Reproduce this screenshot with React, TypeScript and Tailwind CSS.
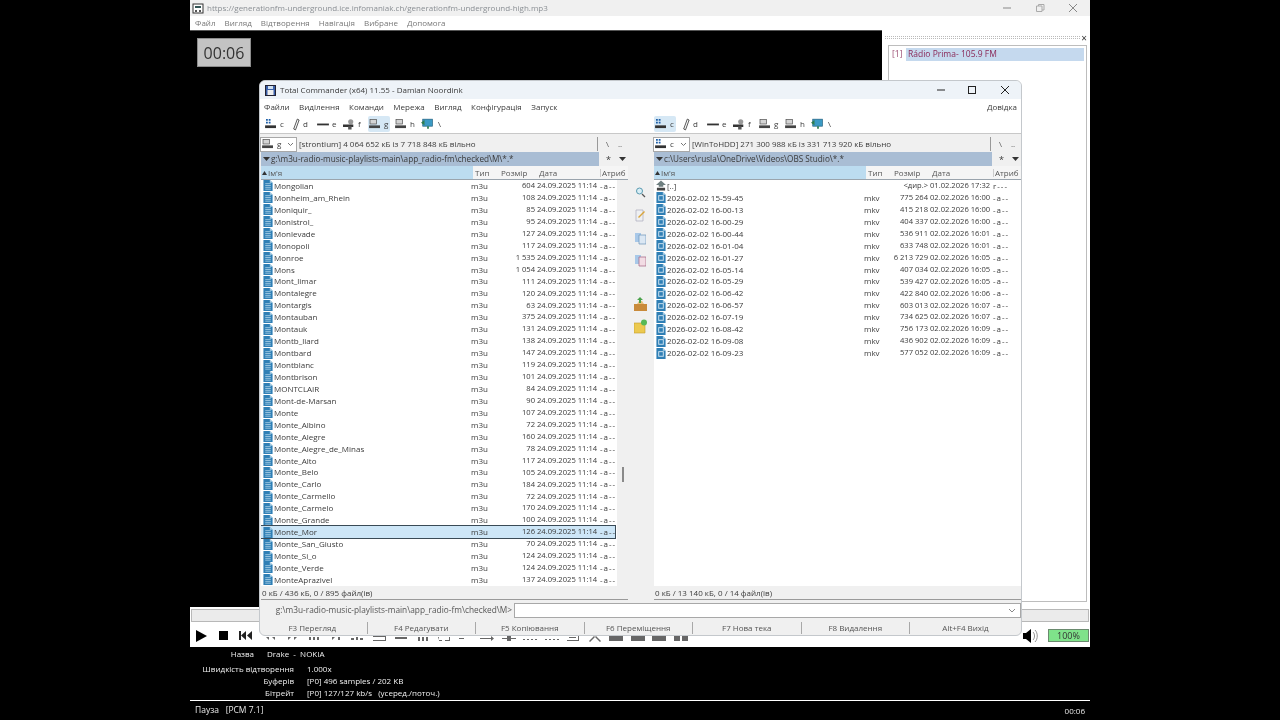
import React from 'react';

const leftRows: [string, string][] = [
  ['Mongolian', '604'], ['Monheim_am_Rhein', '108'], ['Moniquir_', '85'], ['Monistrol_', '95'],
  ['Monlevade', '127'], ['Monopoli', '117'], ['Monroe', '1 535'], ['Mons', '1 054'],
  ['Mont_limar', '111'], ['Montalegre', '120'], ['Montargis', '63'], ['Montauban', '375'],
  ['Montauk', '131'], ['Montb_liard', '138'], ['Montbard', '147'], ['Montblanc', '119'],
  ['Montbrison', '101'], ['MONTCLAIR', '84'], ['Mont-de-Marsan', '90'], ['Monte', '107'],
  ['Monte_Albino', '72'], ['Monte_Alegre', '160'], ['Monte_Alegre_de_Minas', '78'], ['Monte_Alto', '117'],
  ['Monte_Belo', '105'], ['Monte_Carlo', '184'], ['Monte_Carmello', '72'], ['Monte_Carmelo', '170'],
  ['Monte_Grande', '100'], ['Monte_Mor', '126'], ['Monte_San_Giusto', '70'], ['Monte_Si_o', '124'],
  ['Monte_Verde', '124'], ['MonteAprazivel', '137'],
];

const rightRows: [string, string, string][] = [
  ['2026-02-02 15-59-45', '775 264', '02.02.2026 16:00'],
  ['2026-02-02 16-00-13', '415 218', '02.02.2026 16:00'],
  ['2026-02-02 16-00-29', '404 337', '02.02.2026 16:00'],
  ['2026-02-02 16-00-44', '536 911', '02.02.2026 16:01'],
  ['2026-02-02 16-01-04', '633 748', '02.02.2026 16:01'],
  ['2026-02-02 16-01-27', '6 213 729', '02.02.2026 16:05'],
  ['2026-02-02 16-05-14', '407 034', '02.02.2026 16:05'],
  ['2026-02-02 16-05-29', '539 427', '02.02.2026 16:05'],
  ['2026-02-02 16-06-42', '422 840', '02.02.2026 16:06'],
  ['2026-02-02 16-06-57', '603 013', '02.02.2026 16:07'],
  ['2026-02-02 16-07-19', '734 625', '02.02.2026 16:07'],
  ['2026-02-02 16-08-42', '756 173', '02.02.2026 16:09'],
  ['2026-02-02 16-09-08', '436 902', '02.02.2026 16:09'],
  ['2026-02-02 16-09-23', '577 052', '02.02.2026 16:09'],
];

function DocIcon({ video }: { video?: boolean }) {
  return (
    <svg width="10" height="11" viewBox="0 0 10 12" className="shrink-0">
      <path d="M0 0h7l3 3v9H0z" fill="#2f7fb5" />
      <path d="M7 0l3 3H7z" fill="#a9cfe6" />
      {video ? (
        <rect x="2.500" y="4" width="5" height="5" fill="none" stroke="#d5e8f3" strokeWidth="1" />
      ) : (
        <path d="M2 4h6M2 6h6M2 8h6M2 10h6" stroke="#bcdcee" strokeWidth="0.8" />
      )}
    </svg>
  );
}

function UpIcon() {
  return (
    <svg width="10" height="11" viewBox="0 0 11 11" className="shrink-0">
      <path d="M5.500 0L11 5H8v2H3V5H0z" fill="#6f7f80" />
      <path d="M1 8h9v3H1z" fill="#444" />
    </svg>
  );
}

function DriveIcon({ kind }: { kind: string }) {
  if (kind === 'c') {
    return (
      <svg width="12" height="10" viewBox="0 0 13 11" className="shrink-0">
        <path d="M1 0h2v2H1zM4 0h2v2H4zM1 3h2v2H1zM4 3h2v2H4z" fill="#1d5fa8" />
        <rect x="0" y="7" width="12" height="3" fill="#333" />
      </svg>
    );
  }
  if (kind === 'd') {
    return (
      <svg width="9" height="13" viewBox="0 0 10 14" className="shrink-0">
        <path d="M7 1L3 12l2 1 4-11z" fill="#fff" stroke="#333" strokeWidth="0.9" />
      </svg>
    );
  }
  if (kind === 'e') {
    return (
      <svg width="12" height="10" viewBox="0 0 13 11" className="shrink-0">
        <rect x="0" y="5" width="13" height="2" fill="#333" />
      </svg>
    );
  }
  if (kind === 'f') {
    return (
      <svg width="12" height="12" viewBox="0 0 14 13" className="shrink-0">
        <circle cx="9" cy="4" r="3" fill="#999" />
        <path d="M0 7h12v3H0z" fill="#333" />
        <path d="M6 9h4v4H6z" fill="#555" />
      </svg>
    );
  }
  if (kind === 'net') {
    return (
      <svg width="14" height="12" viewBox="0 0 16 13" className="shrink-0">
        <rect x="2" y="1" width="11" height="8" fill="#3b9ac4" stroke="#20607f" strokeWidth="0.8" />
        <path d="M0 5l4-3v6zM7 9h2v3H7z" fill="#2f7d4f" />
      </svg>
    );
  }
  return (
    <svg width="12" height="10" viewBox="0 0 13 11" className="shrink-0">
      <rect x="1" y="0.500" width="7" height="5" fill="#d4d4d4" stroke="#555" strokeWidth="0.8" />
      <rect x="0" y="7" width="12" height="3" fill="#444" />
    </svg>
  );
}

function DriveBar({ active }: { active: string }) {
  const items: [string, string][] = [['c', 'c'], ['d', 'd'], ['e', 'e'], ['f', 'f'], ['g', 'g'], ['h', 'h'], ['net', '\\']];
  return (
    <div className="flex items-center gap-[4px]">
      {items.map(([k, label]) => (
        <div
          key={k}
          className={`h-[16px] w-[22px] pl-[1px] flex items-center gap-[3px] rounded-[2px] ${active === k ? 'bg-[#d6e8f5]' : ''}`}
        >
          <DriveIcon kind={k} />
          <span>{label}</span>
        </div>
      ))}
    </div>
  );
}

function Triangle({ up }: { up?: boolean }) {
  return (
    <svg width={up ? 5 : 7} height="4" viewBox="0 0 7 4" preserveAspectRatio="none" className="shrink-0">
      <path d={up ? 'M3.500 0L7 4H0z' : 'M0 0h7L3.500 4z'} fill="#333" />
    </svg>
  );
}

type PanelProps = {
  drive: string;
  info: string;
  path: string;
  status: string;
  children: React.ReactNode;
  scroll?: boolean;
};

function Panel({ drive, info, path, status, children, scroll }: PanelProps) {
  return (
    <div className="w-[368px] shrink-0 flex flex-col">
      <div className="h-[16px] flex items-center">
        <div className="w-[37px] h-[15px] bg-white border border-[#a8a8a8] flex items-center pl-[1px] gap-[3px] shrink-0">
          <DriveIcon kind={drive} />
          <span>{drive}</span>
          <svg width="7" height="5" viewBox="0 0 7 5" className="ml-auto mr-[2px]"><path d="M1 1l2.500 2.500L6 1" fill="none" stroke="#777" /></svg>
        </div>
        <span className="ml-[2px] whitespace-nowrap">{info}</span>
        <div className="ml-auto w-[31px] h-[14px] border-l border-[#999] pl-[8px] flex items-center gap-[9px] text-[#555]">
          <span>\</span><span>..</span>
        </div>
      </div>
      <div className="h-[14px] flex items-center">
        <div className="w-[338px] h-[14px] ml-[1px] bg-[#a9bdd4] flex items-center pl-[2px] gap-[1px] whitespace-nowrap text-[8.2px]">
          <Triangle />
          {path}
        </div>
        <div className="flex items-center gap-[8px] pl-[7px] text-[9px]"><span>*</span><Triangle /></div>
      </div>
      <div className="h-[14px] bg-[#f5f5f5] border-b border-[#9aa4ad] flex items-center ml-[1px] relative text-[#555]">
        <div className="w-[212px] h-full bg-[#bcdcf0] pl-[1px] gap-[1px] flex items-center"><Triangle up />Ім'я</div>
        <span className="w-[26px] pl-[2px]">Тип</span>
        <span className="w-[38px] pl-[2px]">Розмір</span>
        <span className="w-[63px] pl-[2px]">Дата</span>
        <span className="pl-[1px] border-l border-[#ccc] whitespace-nowrap">Атриб</span>
      </div>
      <div className="flex-1 bg-white ml-[1px] relative overflow-hidden">
        {children}
        {scroll && <div className="absolute right-0 top-0 bottom-0 w-[11px] bg-[#f0f0f0] flex justify-center pt-[287px]"><div className="w-[2px] h-[15px] bg-[#8a8a8a]" /></div>}
      </div>
      <div className="h-[14px] bg-[#f0f0f0] ml-[1px] border-b border-[#9a9a9a] flex items-center pl-[1px] whitespace-nowrap">{status}</div>
    </div>
  );
}

function Row({ name, type, size, date, attr, selected, video, up }: { name: string; type: string; size: string; date: string; attr: string; selected?: boolean; video?: boolean; up?: boolean }) {
  return (
    <div className={`h-[11.94px] w-[354px] flex items-center relative z-10 whitespace-nowrap ${selected ? 'bg-[#cde6f7] outline outline-[#3a4a56]' : ''}`}>
      <div className="w-[13px] pl-[2px] flex items-center shrink-0">
        {up ? <UpIcon /> : <DocIcon video={video} />}
      </div>
      <span className="w-[197px] shrink-0">{name}</span>
      <span className="w-[27px] shrink-0">{type}</span>
      <span className="w-[37px] text-right shrink-0 text-[7.6px]">{size}</span>
      <span className="pl-[2px] w-[65px] shrink-0 text-[7.6px]">{date}</span>
      <span className="tracking-[1px]">{attr}</span>
    </div>
  );
}

// lower parts of the player's buttons, the rest is hidden behind the Total Commander window
const stubs = [
  'M1 8l3 3V8zM7 8l3 3V8z', 'M1 8v3l3-3zM7 8v3l3-3z', 'M1 8h2v3H1zM5 8h2v3H5zM9 8h2v3H9z', 'M2 8v3l3-3zM8 8h2v3H8z',
  'M0 9h3v2H0zM5 8h2v3H5zM9 9h3v2H9z', 'M0 7h13v5H0V11h12V8H0z', 'M1 8h12v2H1z', 'M2 8h2v4H2zM6 8h2v4H6zM10 8h2v4h-2z',
  'M1 8h1v4h3v-1H2zM8 11h4V8h1v4H8z', 'M0 9h5v1H0zM8 8l4 4M12 8l-4 4', 'M0 9h12v1H0zM11 7l3 2.500L11 12z', 'M0 9h14v1H0zM5 7h4v5H5z',
  'M0 10h2v1H0zM4 10h2v1H4zM8 10h2v1H8zM12 10h2v1h-2z', 'M0 10h2v1H0zM4 10h2v1H4zM8 10h2v1H8zM12 10h2v1h-2z',
  'M1 3h12v9H1V11h11V4H1zM3 8h7v1H3z', 'M1 12l5-5 1 1-5 5zM8 7l5 5-1 1-5-5z', 'M0 7h14v5H0z', 'M0 7h14v5H0z', 'M0 7h14v5H0z', 'M0 7h6v5H0zM8 7h6v5H8z',
];

export default function App() {
  return (
    <div className="relative w-[1280px] h-[720px] bg-black overflow-hidden flex justify-center font-['Open_Sans','Liberation_Sans',sans-serif] text-[8px] leading-none text-[#3a3a3a] blur-[0.3px]">
      {/* player window */}
      <div className="w-[900px] h-[720px] flex flex-col bg-white">
        <div className="h-[16px] bg-[#f0f0f0] flex items-center pl-[2px] relative text-[8px] text-[#8a8f94]">
          <svg width="12" height="11" viewBox="0 0 12 11" className="mr-[3px]">
            <rect x="1" y="1" width="10" height="9" fill="#fff" stroke="#333" />
            <path d="M3 3h6v2H3z" fill="#355" />
            <path d="M3 7h2v2H3zM7 7h2v2H7z" fill="#555" />
          </svg>
          <span>https://generationfm-underground.ice.infomaniak.ch/generationfm-underground-high.mp3</span>
          <div className="ml-auto flex items-center">
            <svg width="10" height="10" viewBox="0 0 10 10"><path d="M1 5h8" stroke="#888" /></svg>
            <svg width="10" height="10" viewBox="0 0 10 10" className="ml-[23px]"><path d="M1.500 3h5.500v5.500H1.500zM3.500 3V1.500H9V7H7" fill="none" stroke="#aaa" /></svg>
            <svg width="10" height="10" viewBox="0 0 10 10" className="ml-[23px] mr-[12px]"><path d="M1 1l8 8M9 1l-8 8" stroke="#888" /></svg>
          </div>
        </div>
        <div className="h-[14px] bg-white flex items-center pl-[5px] gap-[9px] text-[#777]">
          <span>Файл</span><span>Вигляд</span><span>Відтворення</span><span>Навігація</span><span>Вибране</span><span>Допомога</span>
        </div>

        <div className="flex h-[577px]">
          <div className="w-[692px] h-full bg-black pt-[7px] pl-[7px] border-t border-[#555]">
            <div className="w-[54px] h-[29px] bg-[#c3c3c3] border border-[#8c8c8c] flex items-center justify-center text-[16px] text-[#333]">00:06</div>
          </div>
          <div className="flex-1 flex flex-col pl-[3px] pr-[3px] bg-white">
            <div className="h-[15px] flex items-center">
              <div className="flex-1 h-[3px] border-y border-dotted border-[#bbb]" />
              <span className="text-[10px] text-[#333] ml-[1px]">×</span>
            </div>
            <div className="h-[557px] ml-[3px] border border-[#bdbdbd] p-[2px] text-[8.5px]">
              <div className="flex h-[13px] items-center text-[#8a2858]">
                <span className="w-[15px] pl-[1px] text-[#9a4a70]">[1]</span>
                <span className="flex-1 bg-[#c5d9ee] h-full flex items-center pl-[2px]">Rádio Prima- 105.9 FM</span>
              </div>
            </div>
          </div>
        </div>

        <div className="h-[17px] flex items-center bg-white">
          <div className="w-[898px] h-[13px] ml-[1px] bg-[#ebebeb] border border-[#b8b8b8]" />
        </div>
        <div className="h-[23px] bg-white flex items-center pl-[6px]">
          <svg width="11" height="12" viewBox="0 0 11 12"><path d="M0 0l11 6-11 6z" fill="#000" /></svg>
          <div className="w-[9px] h-[9px] bg-black ml-[12px]" />
          <svg width="13" height="9" viewBox="0 0 13 9" className="ml-[11px]"><path d="M0 0h2v9H0zM7 0v9L2 4.500zM13 0v9L8 4.500z" fill="#222" /></svg>
          <div className="ml-[13px] flex items-center gap-[7.500px]">
            {stubs.map((d, i) => (
              <svg key={i} width="14" height="14" viewBox="0 0 14 14"><path d={d} fill="#666" /></svg>
            ))}
          </div>
          <div className="ml-auto flex items-center mr-[1px]">
            <svg width="17" height="14" viewBox="0 0 17 14" className="mr-[8px]">
              <path d="M0 4h3l5-4v14l-5-4H0z" fill="#000" />
              <path d="M10 3c2 2 2 6 0 8M12 1c3 3 3 9 0 12" fill="none" stroke="#777" strokeWidth="0.8" />
            </svg>
            <div className="w-[41px] h-[13px] bg-[#7fe28a] border border-[#6a8a6e] flex items-center justify-center text-[9px] text-[#333]">100%</div>
          </div>
        </div>

        {/* info area */}
        <div className="h-[53px] bg-black text-[#f0f0f0] pt-[3px] grid grid-cols-[104px_1fr] gap-x-[13px] auto-rows-[12px]">
          <span className="text-right pr-[40px]">Назва</span>
          <span className="-ml-[40px]">Drake&nbsp; - &nbsp;NOKIA</span>
          <span className="text-right mt-[3px] whitespace-nowrap">Швидкість відтворення</span>
          <span className="mt-[3px]">1.000x</span>
          <span className="text-right mt-[3px]">Буферів</span>
          <span className="mt-[3px]">[P0] 496 samples / 202 KB</span>
          <span className="text-right mt-[3px]">Бітрейт</span>
          <span className="mt-[3px]">[P0] 127/127 kb/s&nbsp;&nbsp; (усеред./поточ.)</span>
        </div>
        <div className="h-[1px] bg-white" />
        <div className="flex-1 bg-black text-[#e8e8e8] flex items-center justify-between px-[5px] text-[8.5px]">
          <span>Пауза&nbsp;&nbsp; [PCM 7.1]</span>
          <span className="text-[8px]">00:06</span>
        </div>
      </div>

      {/* Total Commander window on top */}
      <div className="absolute left-[259px] top-[80px] w-[763px] h-[556px] bg-[#f0f0f0] rounded-[6px] overflow-hidden border border-[#c4c8cc] flex flex-col">
        <div className="h-[18px] bg-[#eef3f8] flex items-center pl-[5px] shrink-0">
          <svg width="11" height="11" viewBox="0 0 11 11" className="mr-[4px]">
            <rect x="0.500" y="0.500" width="10" height="10" fill="#3a5fa8" stroke="#223" />
            <rect x="2.500" y="5" width="6" height="5" fill="#eee" />
            <rect x="3" y="1" width="5" height="3" fill="#cfe0f0" />
          </svg>
          <span>Total Commander (x64) 11.55 - Damian Noordink</span>
          <div className="ml-auto flex items-center">
            <svg width="10" height="10" viewBox="0 0 10 10"><path d="M1 5h8" stroke="#222" /></svg>
            <svg width="10" height="10" viewBox="0 0 10 10" className="ml-[21px]"><rect x="1.500" y="1.500" width="7" height="7" fill="none" stroke="#222" /></svg>
            <svg width="10" height="10" viewBox="0 0 10 10" className="ml-[23px] mr-[11px]"><path d="M1 1l8 8M9 1l-8 8" stroke="#222" /></svg>
          </div>
        </div>
        <div className="h-[16px] bg-white flex items-center pl-[4px] gap-[9.500px] shrink-0">
          <span>Файли</span><span>Виділення</span><span>Команди</span><span>Мережа</span><span>Вигляд</span><span>Конфігурація</span><span>Запуск</span>
          <span className="ml-auto mr-[4px]">Довідка</span>
        </div>
        <div className="h-[19px] bg-white border-b border-[#c8c8c8] flex items-center shrink-0">
          <div className="w-[393px] pl-[4px]"><DriveBar active="g" /></div>
          <div className="pl-[1px]"><DriveBar active="c" /></div>
        </div>

        <div className="h-[466px] flex shrink-0 pt-[2px]">
          <Panel
            drive="g"
            info="[strontium]  4 064 652 кБ із 7 718 848 кБ вільно"
            path="g:\m3u-radio-music-playlists-main\app_radio-fm\checked\M\*.*"
            status="0 кБ / 436 кБ, 0 / 895 файл(ів)"
            scroll
          >
            {leftRows.map(([n, s]) => (
              <Row key={n} name={n} type="m3u" size={s} date="24.09.2025 11:14" attr="-a--" selected={n === 'Monte_Mor'} />
            ))}
          </Panel>

          <div className="w-[25px] shrink-0 flex flex-col items-center pt-[50px] gap-[7px]">
            <svg width="11" height="15" viewBox="0 0 11 15"><circle cx="4.500" cy="5" r="3" fill="#d8eef6" stroke="#5a9ab0" /><path d="M7 8l3 3" stroke="#555" strokeWidth="1.300" /></svg>
            <svg width="11" height="15" viewBox="0 0 11 15"><path d="M1 2h7v11H1z" fill="#eef0f2" stroke="#aab" strokeWidth="0.7" /><path d="M3 9l6-6 1 1-6 6z" fill="#d9a53d" /></svg>
            <svg width="11" height="15" viewBox="0 0 11 15"><path d="M0 3h6v9H0z" fill="#a8c8e8" /><path d="M4 5h7v9H4z" fill="#dbe7f3" stroke="#6b92b8" strokeWidth="0.7" /></svg>
            <svg width="11" height="15" viewBox="0 0 11 15"><path d="M0 3h6v9H0z" fill="#a8c8e8" /><path d="M4 5h7v9H4z" fill="#f2dce4" stroke="#a06080" strokeWidth="0.7" /></svg>
            <div className="h-[16px]" />
            <svg width="13" height="15" viewBox="0 0 13 15"><path d="M0 7h13v7H0z" fill="#c98a3a" /><path d="M3 7l2-3h3l2 3z" fill="#e8c080" /><path d="M6 0l3 3H7v3H5V3H3z" fill="#4aa24a" /></svg>
            <svg width="13" height="15" viewBox="0 0 13 15"><path d="M0 4h11v10H0z" fill="#ecc94f" stroke="#c29a2a" strokeWidth="0.6" /><circle cx="10" cy="3.500" r="3" fill="#57b957" /></svg>
          </div>

          <Panel
            drive="c"
            info="[WinToHDD]  271 300 988 кБ із 331 713 920 кБ вільно"
            path="c:\Users\rusla\OneDrive\Videos\OBS Studio\*.*"
            status="0 кБ / 13 140 кБ, 0 / 14 файл(ів)"
          >
            <Row name="[..]" type="" size="<дир.>" date="01.02.2026 17:32" attr="r---" up />
            {rightRows.map(([n, s, d]) => (
              <Row key={n} name={n} type="mkv" size={s} date={d} attr="-a--" video />
            ))}
          </Panel>
        </div>

        <div className="h-[3px] shrink-0" />
        <div className="h-[15px] bg-[#f0f0f0] flex items-center shrink-0">
          <div className="w-[254px] text-right pr-[2px] whitespace-nowrap text-[#555] text-[8.3px]">g:\m3u-radio-music-playlists-main\app_radio-fm\checked\M&gt;</div>
          <div className="flex-1 h-full bg-white border border-[#a8a8a8] flex items-center justify-end pr-[4px]">
            <svg width="8" height="6" viewBox="0 0 8 6"><path d="M1 1l3 3 3-3" fill="none" stroke="#888" /></svg>
          </div>
        </div>
        <div className="flex-1 -ml-[2px] pt-[3px] grid grid-cols-[repeat(6,108.5px)_1fr] items-center text-center text-[#555]">
          {['F3 Перегляд', 'F4 Редагувати', 'F5 Копіювання', 'F6 Переміщення', 'F7 Нова тека', 'F8 Видалення', 'Alt+F4 Вихід'].map((t, i) => (
            <div key={t} className={`h-[12px] flex items-center justify-center ${i > 0 ? 'border-l border-[#a8a8a8]' : ''}`}>{t}</div>
          ))}
        </div>
      </div>
    </div>
  );
}
